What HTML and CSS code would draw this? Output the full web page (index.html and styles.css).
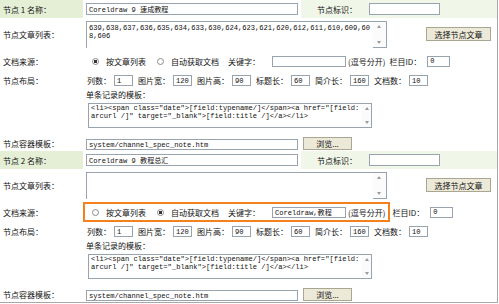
FILE: index.html
```html
<!DOCTYPE html>
<html lang="zh-CN">
<head>
    <meta charset="UTF-8">
    <title>节点设置</title>
    <link rel="stylesheet" href="styles.css">
</head>
<body>
<div class="panel">

    <!-- 节点 1 -->
    <div class="node">
        <div class="label head-label">节点 1 名称：</div>
        <div class="head">
            <div class="name-cell"><input class="box name" type="text" value="Coreldraw 9 速成教程"></div>
            <div class="ident">节点标识：<input class="box ident-box" type="text"></div>
        </div>

        <div class="label">节点文章列表：</div>
        <div class="cell">
            <div class="area list-area">
                <textarea class="list-text">639,638,637,636,635,634,633,630,624,623,621,620,612,611,610,609,608,606</textarea>
                <div class="bar"><span class="up"></span><span class="down"></span></div>
            </div>
            <button class="btn pick-btn">选择节点文章</button>
        </div>

        <div class="label">文档来源：</div>
        <div class="cell source">
            <span class="choice">
                <input class="radio" type="radio" name="src1" checked><span>按文章列表</span>
                <input class="radio second" type="radio" name="src1"><span>自动获取文档</span>
                <span class="kw">关键字：</span><input class="box kw-box" type="text">
                <span class="hint">(逗号分开)</span>
            </span>
            <span class="typeid">栏目ID：</span><input class="box id-box" type="text" value="0">
        </div>

        <div class="label">节点布局：</div>
        <div class="cell layout">
            列数：<input class="box num" type="text" value="1">
            图片宽：<input class="box num" type="text" value="120">
            图片高：<input class="box num" type="text" value="90">
            标题长：<input class="box num" type="text" value="60">
            简介长：<input class="box num" type="text" value="160">
            文档数：<input class="box num" type="text" value="10">
        </div>

        <div class="label"></div>
        <div class="cell tpl">
            <div class="tpl-title">单条记录的模板：</div>
            <div class="area tpl-area">
                <textarea class="tpl-text"><li><span class="date">[field:typename/]</span><a href="[field:arcurl /]" target="_blank">[field:title /]</a></li></textarea>
                <div class="bar"><span class="up"></span><span class="down"></span></div>
            </div>
        </div>

        <div class="label bottom-label">节点容器模板：</div>
        <div class="cell bottom">
            <input class="box file" type="text" value="system/channel_spec_note.htm">
            <button class="btn browse">浏览...</button>
        </div>
    </div>

    <!-- 节点 2 -->
    <div class="node">
        <div class="label head-label">节点 2 名称：</div>
        <div class="head">
            <div class="name-cell"><input class="box name" type="text" value="Coreldraw 9 教程总汇"></div>
            <div class="ident">节点标识：<input class="box ident-box" type="text"></div>
        </div>

        <div class="label">节点文章列表：</div>
        <div class="cell">
            <div class="area list-area">
                <textarea class="list-text"></textarea>
                <div class="bar"><span class="up"></span><span class="down"></span></div>
            </div>
            <button class="btn pick-btn">选择节点文章</button>
        </div>

        <div class="label">文档来源：</div>
        <div class="cell source">
            <span class="choice marked">
                <input class="radio" type="radio" name="src2"><span>按文章列表</span>
                <input class="radio second" type="radio" name="src2" checked><span>自动获取文档</span>
                <span class="kw">关键字：</span><input class="box kw-box" type="text" value="Coreldraw,教程">
                <span class="hint">(逗号分开)</span>
            </span>
            <span class="typeid">栏目ID：</span><input class="box id-box" type="text" value="0">
        </div>

        <div class="label">节点布局：</div>
        <div class="cell layout">
            列数：<input class="box num" type="text" value="1">
            图片宽：<input class="box num" type="text" value="120">
            图片高：<input class="box num" type="text" value="90">
            标题长：<input class="box num" type="text" value="60">
            简介长：<input class="box num" type="text" value="160">
            文档数：<input class="box num" type="text" value="10">
        </div>

        <div class="label"></div>
        <div class="cell tpl">
            <div class="tpl-title">单条记录的模板：</div>
            <div class="area tpl-area">
                <textarea class="tpl-text"><li><span class="date">[field:typename/]</span><a href="[field:arcurl /]" target="_blank">[field:title /]</a></li></textarea>
                <div class="bar"><span class="up"></span><span class="down"></span></div>
            </div>
        </div>

        <div class="label bottom-label">节点容器模板：</div>
        <div class="cell bottom">
            <input class="box file" type="text" value="system/channel_spec_note.htm">
            <button class="btn browse">浏览...</button>
        </div>
    </div>

</div>
</body>
</html>
```

FILE: styles.css
```css
body { margin: 0; font-family: "Noto Sans CJK SC", sans-serif; font-size: 8px; color: #111; background: #fff; }
.panel { width: 497px; border-right: 1px solid #a8a8a8; border-bottom: 1px solid #a8a8a8; }

/* one node = label column + content column */
.node {
    display: grid;
    grid-template-columns: 83px 1fr;
    grid-template-rows: 18px 32px 22px 17px 44px 18px;
}
.label { display: flex; align-items: center; padding-left: 3px; white-space: nowrap; }
.head-label { background: #e4efd6; }
.bottom-label { align-items: flex-end; padding-bottom: 2px; }

.head { display: flex; }
.name-cell { width: 218px; display: flex; align-items: center; padding-left: 3px; box-sizing: border-box; background: #fff; }
.ident { flex: 1; display: flex; align-items: center; padding-left: 16px; background: #f0f7e8; white-space: nowrap; }

.cell { display: flex; align-items: center; padding-left: 3px; white-space: nowrap; }

/* text boxes */
.box {
    font: 7.1px "Liberation Mono", "Noto Sans CJK SC", monospace;
    height: 11px;
    border: 1px solid #97a3ae;
    padding: 0 2px;
    box-sizing: border-box;
    color: #111;
    background: #fff;
    outline: none;
}
.name { width: 212px; height: 12px; }
.ident-box { width: 71px; height: 12px; margin-left: 12px; }

/* textarea with a drawn scroll bar */
.area { display: flex; border: 1px solid #97a3ae; box-sizing: border-box; background: #fff; }
.area textarea {
    flex: none;
    border: none;
    resize: none;
    overflow: hidden;
    outline: none;
    margin: 0;
    font: 7.1px "Liberation Mono", "Noto Sans CJK SC", monospace;
    color: #111;
    word-break: break-all;
    background: #fff;
}
.bar { flex: 1; display: flex; flex-direction: column; justify-content: space-between; align-items: center; padding: 3px 0; background: #fbfbfb; }
.up { width: 0; height: 0; border-left: 2px solid transparent; border-right: 2px solid transparent; border-bottom: 3px solid #9a9a9a; }
.down { width: 0; height: 0; border-left: 2px solid transparent; border-right: 2px solid transparent; border-top: 3px solid #9a9a9a; }

.list-area { width: 301px; height: 27px; }
.list-text { width: 66.6ch; height: 25px; padding: 2px 0 0 2px; line-height: 8px; }

/* buttons */
.btn {
    font-family: "Noto Sans CJK SC", sans-serif;
    font-size: 8px;
    color: #111;
    background: #ece9d8;
    border: 1px solid #a9a692;
    padding: 0;
    box-sizing: border-box;
}
.pick-btn { width: 65px; height: 14px; margin-left: 39px; }
.browse { width: 49px; height: 13px; margin-left: 5px; }

/* document source */
.source { padding-left: 0; }
.choice {
    display: flex;
    align-items: center;
    height: 20px;
    box-sizing: border-box;
    border: 2px solid transparent;
    padding: 0 0 0 7px;
}
.choice.marked { border-color: #f4801e; padding-right: 3px; }
.radio {
    appearance: none;
    width: 7px;
    height: 7px;
    margin: 0 7px 0 0;
    border: 1px solid #8c8c8c;
    border-radius: 50%;
    background: #fff;
}
.radio:checked { background: radial-gradient(circle, #333 0 1.4px, #fff 2px); }
.radio.second { margin-left: 11px; }
.kw { margin-left: 9px; }
.kw-box { width: 74px; margin-left: 12px; }
.hint { margin-left: 2px; }
.typeid { margin-left: 2px; }
.id-box { width: 23px; margin-left: 6px; }

/* layout numbers */
.layout { padding-left: 4px; }
.num { width: 19px; margin: 0 5px 0 3px; }

/* template */
.tpl { flex-direction: column; align-items: flex-start; padding-top: 1px; }
.tpl-title { line-height: 10px; }
.tpl-area { width: 284px; height: 25px; margin: 3px 0 0 2px; }
.tpl-text { width: 63.7ch; height: 23px; padding: 0 0 0 2px; line-height: 9px; }

.bottom { align-items: flex-end; padding-bottom: 1px; }
.file { width: 212px; }
```
